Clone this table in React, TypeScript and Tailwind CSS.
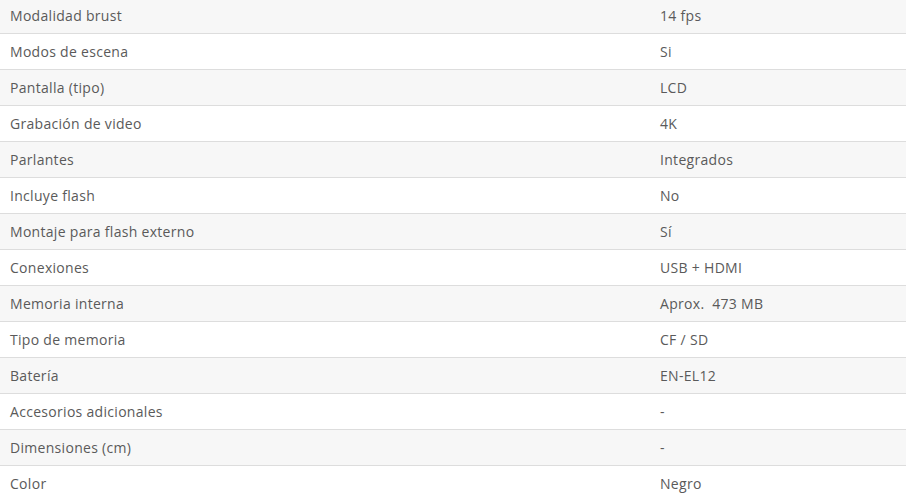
const specs: Array<[string, string]> = [
  ["Modalidad brust", "14 fps"],
  ["Modos de escena", "Si"],
  ["Pantalla (tipo)", "LCD"],
  ["Grabación de video", "4K"],
  ["Parlantes", "Integrados"],
  ["Incluye flash", "No"],
  ["Montaje para flash externo", "Sí"],
  ["Conexiones", "USB + HDMI"],
  ["Memoria interna", "Aprox.  473 MB"],
  ["Tipo de memoria", "CF / SD"],
  ["Batería", "EN-EL12"],
  ["Accesorios adicionales", "-"],
  ["Dimensiones (cm)", "-"],
  ["Color", "Negro"],
];

export default function App() {
  return (
    <div className="w-[906px] h-[504px] overflow-hidden bg-white">
      <div className="-mt-[2px]" style={{ fontFamily: '"Open Sans", sans-serif' }}>
        {specs.map(([label, value], i) => (
          <div
            key={label}
            className={`flex h-[36px] items-center border-b text-[14px] tracking-[0.3px] text-[#5a5a5a] ${
              i < specs.length - 1 ? "border-[#dddddd]" : "border-transparent"
            } ${i % 2 === 0 ? "bg-[#f7f7f7]" : "bg-white"}`}
          >
            <div className="w-[650px] pl-[10px]">{label}</div>
            <div className="flex-1 pl-[10px] whitespace-pre">{value}</div>
          </div>
        ))}
      </div>
    </div>
  );
}
